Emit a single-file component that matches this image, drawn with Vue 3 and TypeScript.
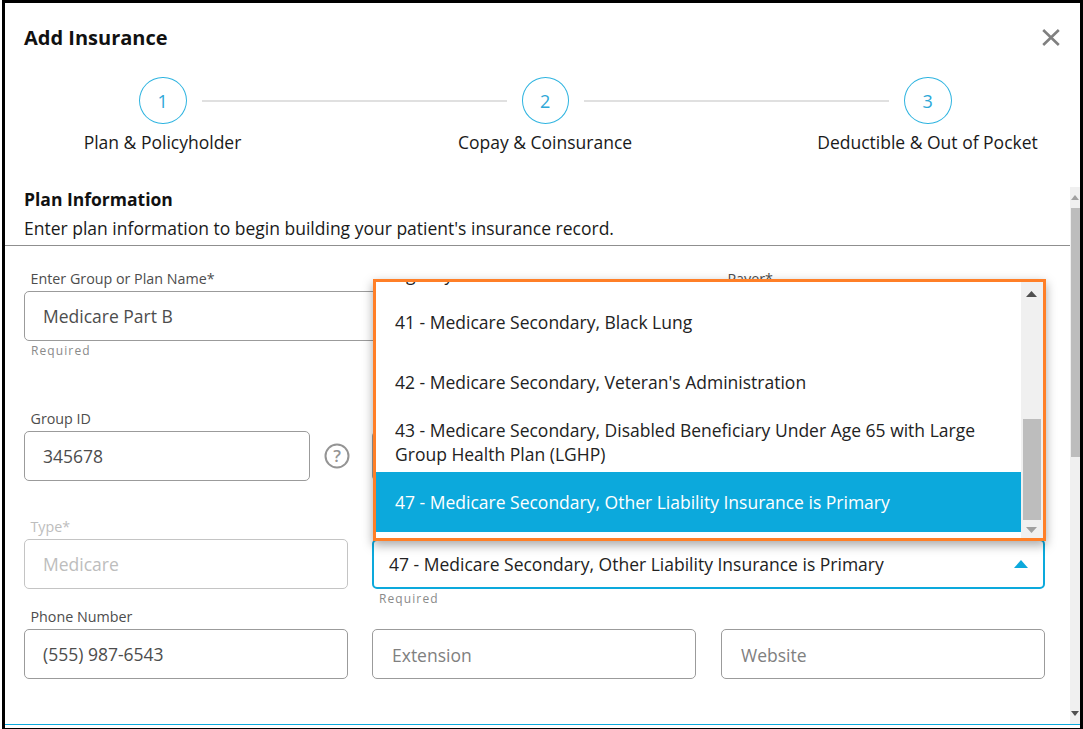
<script setup lang="ts">
interface Step {
  num: number
  label: string
}

const steps: Step[] = [
  { num: 1, label: 'Plan & Policyholder' },
  { num: 2, label: 'Copay & Coinsurance' },
  { num: 3, label: 'Deductible & Out of Pocket' }
]

const selected = '47 - Medicare Secondary, Other Liability Insurance is Primary'

const options = [
  { text: '16 - Medicare Secondary, Public Health Service (PHS) or Other Federal Agency', active: false },
  { text: '41 - Medicare Secondary, Black Lung', active: false },
  { text: "42 - Medicare Secondary, Veteran's Administration", active: false },
  { text: '43 - Medicare Secondary, Disabled Beneficiary Under Age 65 with Large Group Health Plan (LGHP)', active: false },
  { text: selected, active: true }
]
</script>

<template>
  <div class="frame">
    <header class="head">
      <h1>Add Insurance</h1>
      <svg class="close" width="18" height="17" viewBox="0 0 18 17">
        <path d="M1.2 1 16.8 16M16.8 1 1.2 16" stroke="#808080" stroke-width="2.6" fill="none" />
      </svg>
    </header>

    <div class="track">
      <template v-for="(s, i) in steps" :key="s.num">
        <div class="circle">{{ s.num }}</div>
        <div v-if="i < steps.length - 1" class="bar"></div>
      </template>
    </div>
    <div class="labels">
      <div v-for="s in steps" :key="s.num" class="step-label">{{ s.label }}</div>
    </div>

    <div class="body">
      <div class="body-main">
        <h2>Plan Information</h2>
        <p class="lead">Enter plan information to begin building your patient's insurance record.</p>
        <div class="rule"></div>

        <div class="form">
          <div class="row row-first">
            <div class="field span2">
              <label>Enter Group or Plan Name*</label>
              <div class="input">Medicare Part B</div>
              <div class="hint">Required</div>
            </div>
            <div class="field col3">
              <label class="payer">Payer*</label>
              <div class="input"></div>
            </div>
          </div>

          <div class="row row-second">
            <div class="field group">
              <label>Group ID</label>
              <div class="group-line">
                <div class="input">345678</div>
                <svg class="help" width="26" height="26" viewBox="0 0 26 26">
                  <circle cx="13" cy="13" r="11.5" fill="none" stroke="#949494" stroke-width="2" />
                  <text x="13" y="18.5" text-anchor="middle" class="help-q">?</text>
                </svg>
              </div>
            </div>
            <div class="field">
              <label>&nbsp;</label>
              <div class="input"></div>
            </div>
            <div class="field col3">
              <label>&nbsp;</label>
              <div class="input"></div>
            </div>
          </div>

          <div class="row row-third">
            <div class="field off">
              <label>Type*</label>
              <div class="input">Medicare</div>
            </div>
            <div class="field span2">
              <label>&nbsp;</label>
              <div class="select">
                <span>{{ selected }}</span>
                <svg width="14" height="8" viewBox="0 0 14 8"><path d="M7 0 14 8H0Z" fill="#0ca9dc" /></svg>
              </div>
              <div class="hint">Required</div>
            </div>
          </div>

          <div class="row">
            <div class="field">
              <label>Phone Number</label>
              <div class="input">(555) 987-6543</div>
            </div>
            <div class="field">
              <label>&nbsp;</label>
              <div class="input empty">Extension</div>
            </div>
            <div class="field col3">
              <label>&nbsp;</label>
              <div class="input empty">Website</div>
            </div>
          </div>
        </div>

        <!-- open dropdown, sits over the form -->
        <div class="dropdown">
          <ul class="list">
            <li v-for="o in options" :key="o.text" :class="{ active: o.active }">{{ o.text }}</li>
          </ul>
          <div class="mini-scroll">
            <svg class="up" width="11" height="6" viewBox="0 0 11 6"><path d="M5.5 0 11 6H0Z" fill="#505050" /></svg>
            <div class="mini-thumb"></div>
            <svg class="down" width="11" height="6" viewBox="0 0 11 6"><path d="M5.5 6 11 0H0Z" fill="#a0a0a0" /></svg>
          </div>
        </div>
      </div>

      <div class="scroll">
        <svg width="8" height="5" viewBox="0 0 8 5"><path d="M4 0 8 5H0Z" fill="#a0a0a0" /></svg>
        <div class="thumb"></div>
        <svg class="scroll-down" width="8" height="5" viewBox="0 0 8 5"><path d="M4 5 8 0H0Z" fill="#505050" /></svg>
      </div>
    </div>

    <div class="foot-line"></div>
  </div>
</template>

<style scoped>
.frame {
  position: relative;
  box-sizing: border-box;
  width: 1081px;
  height: 729px;
  margin-left: 2px;
  border: solid #000;
  border-width: 3px 3px 1px 3px;
  background: #fff;
  overflow: hidden;
  font-family: 'Open Sans', 'Noto Sans', sans-serif;
  color: #1a1a1a;
}

.head {
  display: flex;
  justify-content: space-between;
  align-items: flex-start;
  padding: 21px 20px 0 19px;
  height: 53px;
  box-sizing: border-box;
}

h1 {
  margin: 0;
  font-size: 20px;
  line-height: 27px;
  font-weight: 700;
  color: #111;
}

.close {
  margin-top: 5px;
}

.track {
  display: flex;
  align-items: center;
  margin-top: 21px;
  padding-left: 134px;
}

.circle {
  box-sizing: border-box;
  width: 47.5px;
  height: 47px;
  flex: none;
  border: 1px solid #2fb4e0;
  border-radius: 50%;
  display: flex;
  align-items: center;
  justify-content: center;
  font-size: 18px;
  color: #2ea8d8;
}

.bar {
  width: 305px;
  height: 2px;
  margin: 0 15px;
  background: #e0e0e0;
}

.labels {
  display: grid;
  grid-template-columns: repeat(3, 230px);
  column-gap: 152.5px;
  margin-top: 6px;
  padding-left: 42.5px;
}

.step-label {
  font-size: 17.5px;
  line-height: 24px;
  text-align: center;
  white-space: nowrap;
}

.body {
  position: absolute;
  left: 0;
  right: 0;
  top: 184px;
  bottom: 4px;
  display: flex;
}

.body-main {
  position: relative;
  flex: 1;
  min-width: 0;
}

h2 {
  margin: 0;
  padding: 0 0 0 19px;
  font-size: 17.5px;
  line-height: 24px;
  font-weight: 700;
  color: #111;
}

.lead {
  margin: 5px 0 0;
  padding-left: 19px;
  font-size: 17.5px;
  line-height: 24px;
}

.rule {
  height: 1px;
  margin: 5px 0 0 -5px;
  background: #8f8f8f;
}

.form {
  padding: 23px 0 0 19px;
  width: 1021px;
}

.row {
  display: grid;
  grid-template-columns: 324px 324px 325px;
  column-gap: 24px;
}

.span2 {
  grid-column: span 2;
}

.col3 {
  margin-left: 1px;
}

label {
  display: block;
  padding-left: 6.5px;
  margin-bottom: 2px;
  font-size: 14.3px;
  line-height: 20px;
  height: 20px;
  color: #4d4d4d;
  white-space: nowrap;
}

.input,
.select {
  box-sizing: border-box;
  height: 50px;
  border: 1px solid #9b9b9b;
  border-radius: 5px;
  padding-left: 18px;
  font-size: 17.5px;
  line-height: 48px;
  color: #4d4d4d;
  background: #fff;
}

.hint {
  padding-left: 7px;
  margin-top: 2px;
  font-size: 12px;
  line-height: 16px;
  letter-spacing: 1.1px;
  color: #8a8a8a;
}

.row-first {
  height: 140px;
}

.group-line {
  display: flex;
  align-items: center;
  gap: 14px;
}

.group-line .input {
  width: 286px;
  flex: none;
}

.help {
  flex: none;
}

.help-q {
  font-family: 'Open Sans', sans-serif;
  font-size: 17px;
  font-weight: 600;
  fill: #949494;
}

.row-third {
  margin-top: 36px;
  height: 90px;
}

.off label {
  color: #bdbdbd;
}

.off .input {
  border-color: #c4c4c4;
  color: #bdbdbd;
}

.select {
  display: flex;
  align-items: center;
  justify-content: space-between;
  border: 2px solid #0ca9dc;
  padding: 0 15px;
  line-height: 24px;
  color: #222;
}

.empty {
  padding-left: 19px;
  color: #808080;
  line-height: 50px;
}

.dropdown {
  position: absolute;
  left: 368px;
  top: 92px;
  box-sizing: border-box;
  width: 673px;
  height: 262px;
  border: 3px solid #ff7f27;
  background: #fff;
  display: flex;
  overflow: hidden;
  box-shadow: 0 4px 10px rgba(0, 0, 0, 0.35);
}

.list {
  list-style: none;
  margin: -50px 0 6px;
  padding: 0;
  width: 645px;
  flex: none;
}

.list li {
  box-sizing: border-box;
  height: 60px;
  padding: 0 30px 0 19px;
  display: flex;
  align-items: center;
  font-size: 17.5px;
  line-height: 24px;
  color: #222;
}

.list li.active {
  background: #0ca9dc;
  color: #fff;
}

.mini-scroll {
  position: relative;
  flex: 1;
  background: #f0f0f0;
}

.mini-thumb {
  position: absolute;
  left: 2px;
  right: 2px;
  bottom: 18px;
  height: 101px;
  background: #bdbdbd;
}

.mini-scroll .up {
  position: absolute;
  left: 5px;
  top: 9px;
}

.mini-scroll .down {
  position: absolute;
  left: 5px;
  bottom: 5px;
}

.scroll {
  position: relative;
  flex: none;
  width: 10px;
  background: #f0f0f0;
  display: flex;
  flex-direction: column;
  align-items: center;
}

.scroll svg {
  margin-top: 8px;
}

.thumb {
  width: 9px;
  height: 249px;
  margin-top: 8px;
  margin-left: 1px;
  background: #bdbdbd;
}

.scroll .scroll-down {
  margin-top: auto;
  margin-bottom: 8px;
}

.foot-line {
  position: absolute;
  left: -5px;
  right: 0;
  bottom: 3px;
  height: 1px;
  background: #0ca9dc;
}
</style>

<style>
html,
body {
  background: #fff;
}
</style>
